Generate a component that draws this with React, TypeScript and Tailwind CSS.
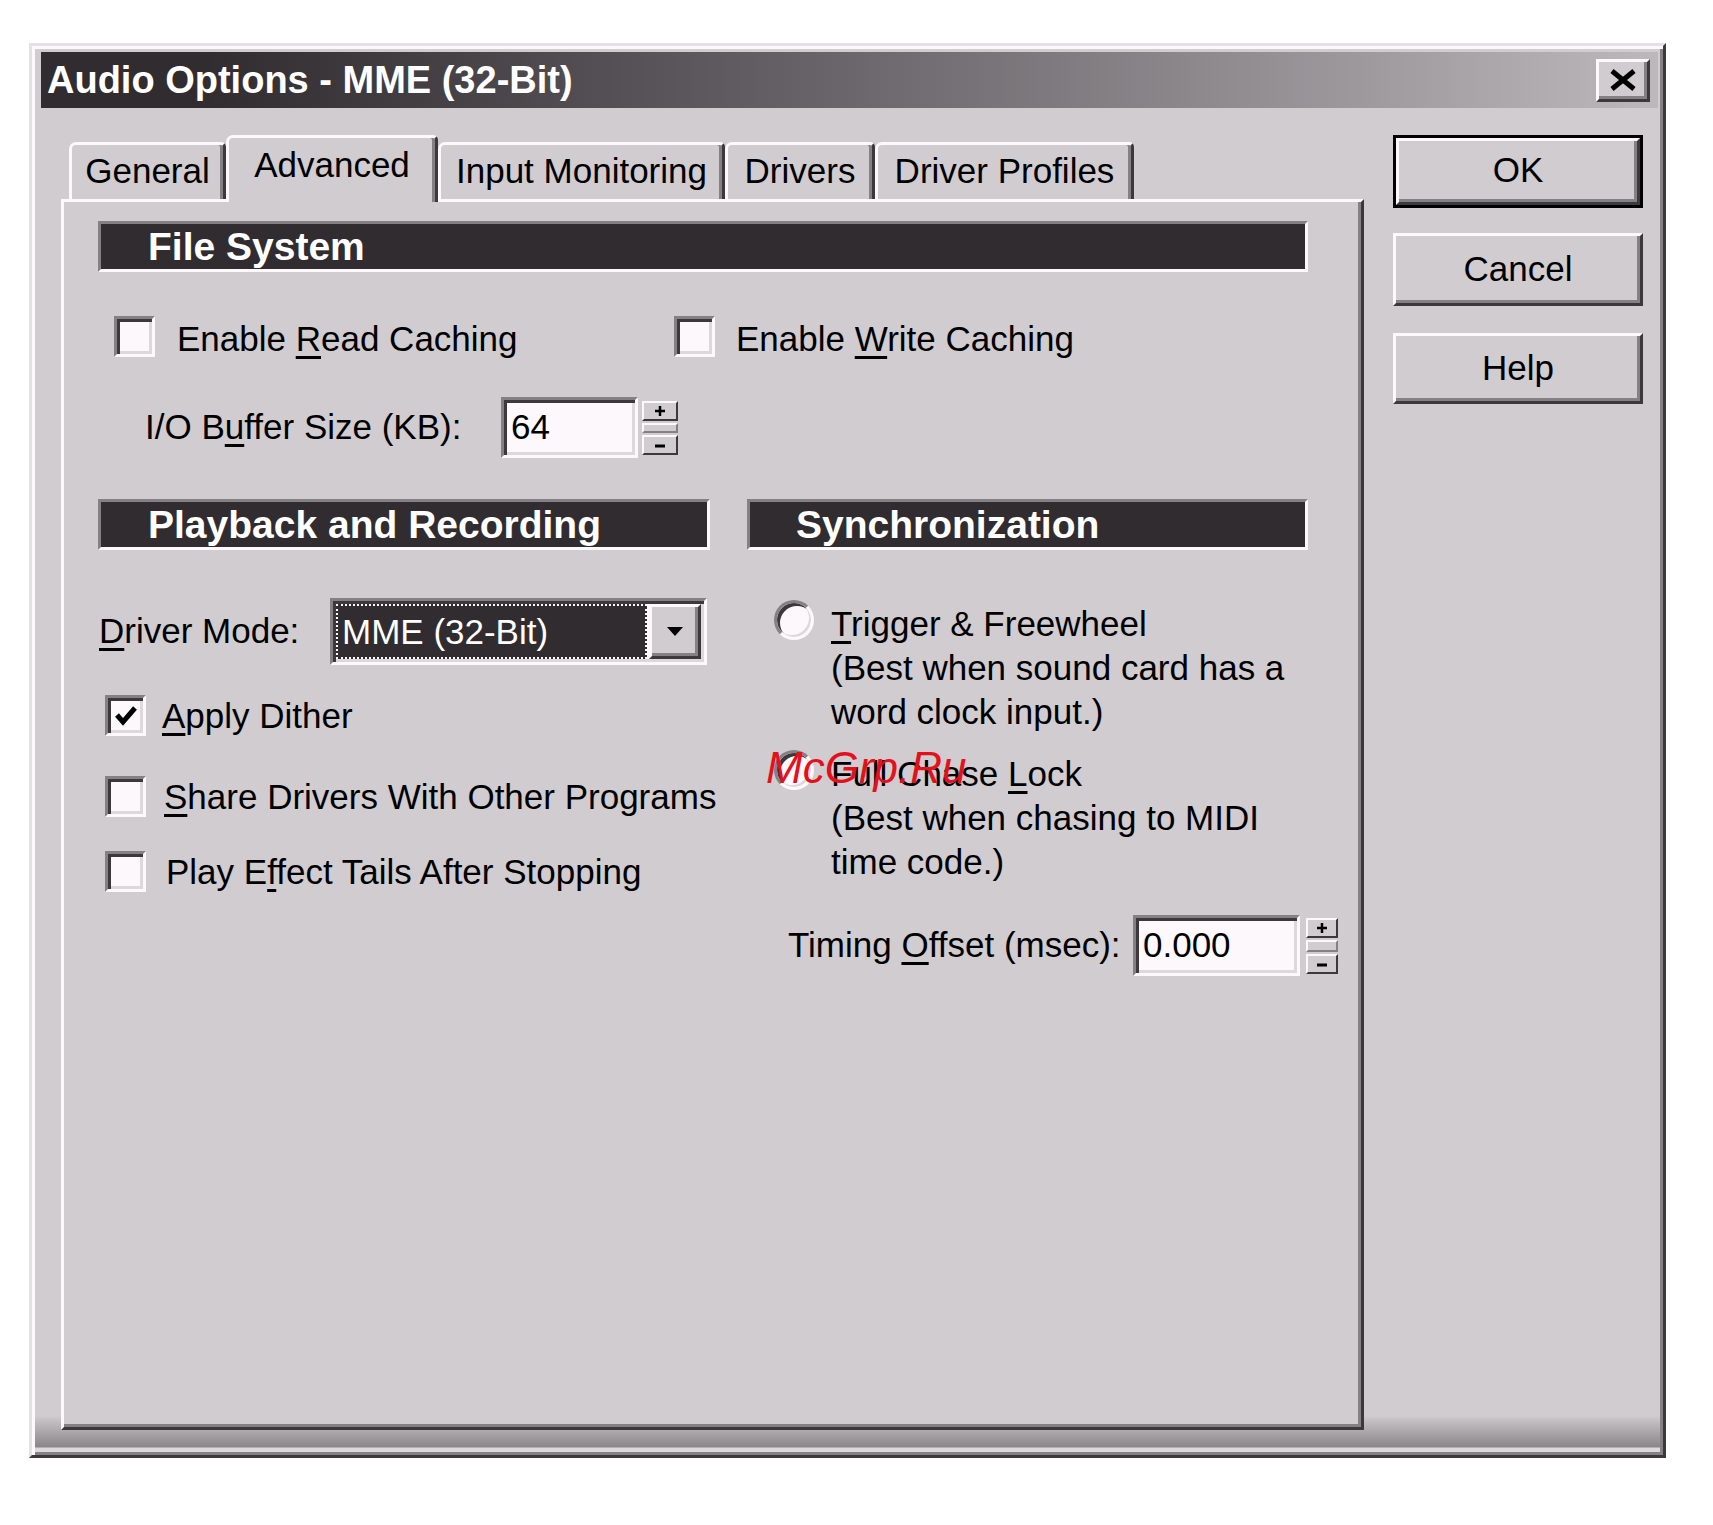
import React from "react";

const raised =
  "border-[3px] border-t-[#fcf8fc] border-l-[#fcf8fc] border-r-[#3c383c] border-b-[#3c383c] shadow-[inset_-3px_-3px_0_0_#848084]";
const sunken =
  "border-[3px] border-t-[#848084] border-l-[#848084] border-r-[#fcf8fc] border-b-[#fcf8fc] shadow-[inset_3px_3px_0_0_#3c383c,inset_-3px_-3px_0_0_#dcd8dc]";

function Check({ checked }: { checked?: boolean }) {
  return (
    <div className={`w-[41px] h-[41px] shrink-0 bg-[#fcf8fc] flex items-center justify-center ${sunken}`}>
      {checked && (
        <svg viewBox="0 0 24 24" className="w-[24px] h-[24px]">
          <path d="M3 11 L9 18 L21 4" fill="none" stroke="#000" strokeWidth="5" />
        </svg>
      )}
    </div>
  );
}

function Radio() {
  return (
    <div className="w-[40px] h-[40px] shrink-0 rounded-full bg-[#fcf8fc] border-[3px] border-t-[#848084] border-l-[#848084] border-r-[#fcf8fc] border-b-[#fcf8fc] shadow-[inset_3px_3px_0_0_#3c383c,inset_-2px_-2px_0_0_#dcd8dc]" />
  );
}

function SpinBtn({ minus }: { minus?: boolean }) {
  return (
    <div className="h-[20px] bg-[#d0ccd0] border-[2px] border-t-[#fcf8fc] border-l-[#fcf8fc] border-r-[#3c383c] border-b-[#3c383c] flex items-center justify-center">
      <svg viewBox="0 0 12 12" className="w-[12px] h-[12px]">
        {minus ? (
          <path d="M1 7H11" stroke="#000" strokeWidth="3" />
        ) : (
          <path d="M6 1V11M1 6H11" stroke="#000" strokeWidth="2.5" />
        )}
      </svg>
    </div>
  );
}

function Spinner({ cls }: { cls: string }) {
  return (
    <div className={`flex flex-col gap-[2px] ${cls}`}>
      <SpinBtn />
      <div className="flex-1 bg-[#d0ccd0] border-[2px] border-t-[#fcf8fc] border-l-[#fcf8fc] border-r-[#848084] border-b-[#848084]" />
      <SpinBtn minus />
    </div>
  );
}

function Header({ cls, children }: { cls: string; children: React.ReactNode }) {
  return (
    <div
      className={`h-[51px] bg-[#302c30] border-[3px] border-t-[#848084] border-l-[#848084] border-r-[#fcf8fc] border-b-[#fcf8fc] flex items-center text-white font-bold text-[39px] leading-none whitespace-nowrap ${cls}`}
    >
      {children}
    </div>
  );
}

const tabBase =
  "border-t-[3px] border-l-[3px] border-r-[3px] border-t-[#fcf8fc] border-l-[#fcf8fc] border-r-[#3c383c] rounded-tl-[7px] rounded-tr-[5px] shadow-[inset_-3px_0_0_0_#848084] bg-[#d0ccd0] flex justify-center leading-[40px] text-[35px] whitespace-nowrap";

export default function App() {
  return (
    <div className="relative min-h-[1525px] bg-white pl-[29px] pt-[43px] font-['Liberation_Sans',Arial,sans-serif] text-black">
      <div className="w-[1637px] h-[1415px] border-[3px] border-t-[#e4e0e4] border-l-[#e4e0e4] border-r-[#3c383c] border-b-[#3c383c] shadow-[inset_3px_3px_0_0_#fcf8fc,inset_-3px_-3px_0_0_#848084] bg-[linear-gradient(to_bottom,#d0ccd0_1370px,#c4c0c4_1374px,#8a868a_1401px,#dcd8dc_1402px)] flex flex-col">
        {/* Title bar */}
        <div className="ml-[9px] mr-[5px] mt-[6px] h-[56px] bg-linear-to-r from-[#302c30] from-10% to-[#bcb8bc] flex items-center justify-between pl-[6px] pr-[8px]">
          <span className="text-white font-bold text-[38px] leading-none whitespace-nowrap">
            Audio Options - MME (32-Bit)
          </span>
          <div className={`w-[54px] h-[43px] bg-[#d0ccd0] flex items-center justify-center ${raised}`}>
            <svg viewBox="0 0 28 22" className="w-[28px] h-[22px]">
              <path d="M3 2 L25 20 M25 2 L3 20" stroke="#000" strokeWidth="5" />
            </svg>
          </div>
        </div>

        {/* Body */}
        <div className="mt-[27px] ml-[29px] flex items-start">
          <div className="flex flex-col w-[1303px]">
            {/* Tabs */}
            <div className="flex items-end h-[64px] pl-[8px]">
              <div className={`${tabBase} w-[157px] h-[57px] pt-[6px]`}>General</div>
              <div className={`${tabBase} w-[212px] h-[67px] -mb-[3px] relative z-10 pt-[7px]`}>Advanced</div>
              <div className={`${tabBase} w-[287px] h-[57px] pt-[6px]`}>Input Monitoring</div>
              <div className={`${tabBase} w-[150px] h-[57px] pt-[6px]`}>Drivers</div>
              <div className={`${tabBase} w-[259px] h-[57px] pt-[6px]`}>Driver Profiles</div>
            </div>

            {/* Panel */}
            <div className={`h-[1231px] bg-[#d0ccd0] pl-[34px] pt-[19px] text-[35px] ${raised}`}>
              <Header cls="w-[1210px] pl-[47px]">File System</Header>

              <div className="mt-[44px] flex items-center h-[41px]">
                <div className="ml-[16px] w-[560px] flex items-center gap-[22px]">
                  <Check />
                  <span className="whitespace-nowrap pt-[6px]">
                    Enable <u className="underline-offset-[5px]">R</u>ead Caching
                  </span>
                </div>
                <div className="flex items-center gap-[21px]">
                  <Check />
                  <span className="whitespace-nowrap pt-[6px]">
                    Enable <u className="underline-offset-[5px]">W</u>rite Caching
                  </span>
                </div>
              </div>

              <div className="mt-[40px] flex items-center h-[61px]">
                <span className="ml-[47px] w-[356px] whitespace-nowrap">
                  I/O B<u className="underline-offset-[5px]">u</u>ffer Size (KB):
                </span>
                <div className={`w-[137px] h-[61px] bg-[#fcf8fc] flex items-center pl-[7px] ${sunken}`}>64</div>
                <Spinner cls="ml-[4px] w-[36px] h-[54px]" />
              </div>

              <div className="mt-[41px] flex gap-[37px]">
                <Header cls="w-[612px] h-[48px] pl-[47px]">Playback and Recording</Header>
                <Header cls="w-[561px] h-[48px] pl-[46px]">Synchronization</Header>
              </div>

              <div className="flex gap-[37px]">
                {/* Left column */}
                <div className="w-[612px] flex flex-col">
                  <div className="mt-[48px] flex items-center h-[67px]">
                    <span className="ml-[1px] w-[231px] whitespace-nowrap">
                      <u className="underline-offset-[5px]">D</u>river Mode:
                    </span>
                    <div className={`w-[377px] h-[67px] bg-[#fcf8fc] flex items-stretch p-[3px] ${sunken}`}>
                      <div className="flex-1 bg-[#302c30] border-[2px] border-dotted border-[#fcf8fc] text-white flex items-center pl-[4px] mr-[2px] whitespace-nowrap leading-none">
                        MME (32-Bit)
                      </div>
                      <div className={`w-[52px] bg-[#d0ccd0] flex items-center justify-center ${raised}`}>
                        <svg viewBox="0 0 16 9" className="w-[16px] h-[9px]">
                          <path d="M0 0 H16 L8 9 Z" fill="#000" />
                        </svg>
                      </div>
                    </div>
                  </div>

                  <div className="mt-[30px] flex items-center h-[41px] ml-[7px] gap-[16px]">
                    <Check checked />
                    <span className="whitespace-nowrap pt-[2px]">
                      <u className="underline-offset-[5px]">A</u>pply Dither
                    </span>
                  </div>

                  <div className="mt-[40px] flex items-center h-[41px] ml-[7px] gap-[18px]">
                    <Check />
                    <span className="whitespace-nowrap pt-[2px]">
                      <u className="underline-offset-[5px]">S</u>hare Drivers With Other Programs
                    </span>
                  </div>

                  <div className="mt-[34px] flex items-center h-[41px] ml-[7px] gap-[20px]">
                    <Check />
                    <span className="whitespace-nowrap pt-[2px]">
                      Play E<u className="underline-offset-[5px]">f</u>fect Tails After Stopping
                    </span>
                  </div>
                </div>

                {/* Right column */}
                <div className="w-[561px] flex flex-col">
                  <div className="mt-[50px] flex items-start ml-[27px] gap-[17px]">
                    <Radio />
                    <div className="mt-[2px] leading-[44px] whitespace-nowrap">
                      <div>
                        <u className="underline-offset-[5px]">T</u>rigger &amp; Freewheel
                      </div>
                      <div>(Best when sound card has a</div>
                      <div>word clock input.)</div>
                    </div>
                  </div>

                  <div className="mt-[16px] flex items-start ml-[27px] gap-[17px]">
                    <Radio />
                    <div className="mt-[2px] leading-[44px] whitespace-nowrap">
                      <div>
                        Full Chase <u className="underline-offset-[5px]">L</u>ock
                      </div>
                      <div>(Best when chasing to MIDI</div>
                      <div>time code.)</div>
                    </div>
                  </div>

                  <div className="mt-[31px] flex items-center h-[61px]">
                    <span className="ml-[41px] w-[345px] shrink-0 whitespace-nowrap">
                      Timing <u className="underline-offset-[5px]">O</u>ffset (msec):
                    </span>
                    <div className={`w-[167px] h-[61px] shrink-0 bg-[#fcf8fc] flex items-center pl-[7px] ${sunken}`}>
                      0.000
                    </div>
                    <Spinner cls="ml-[6px] w-[32px] h-[56px] shrink-0" />
                  </div>
                </div>
              </div>
            </div>
          </div>

          {/* Buttons */}
          <div className="ml-[29px] w-[250px] flex flex-col text-[35px]">
            <div className="h-[73px] border-[3px] border-black">
              <div className={`h-full bg-[#d0ccd0] flex items-center justify-center pb-[3px] ${raised}`}>OK</div>
            </div>
            <div className={`mt-[25px] h-[73px] bg-[#d0ccd0] flex items-center justify-center ${raised}`}>
              Cancel
            </div>
            <div className={`mt-[27px] h-[71px] bg-[#d0ccd0] flex items-center justify-center ${raised}`}>
              Help
            </div>
          </div>
        </div>
      </div>

      {/* Watermark */}
      <div className="absolute left-[766px] top-[746px] text-[44px] italic leading-none text-[#e4101c] whitespace-nowrap">
        McGrp.Ru
      </div>
    </div>
  );
}
